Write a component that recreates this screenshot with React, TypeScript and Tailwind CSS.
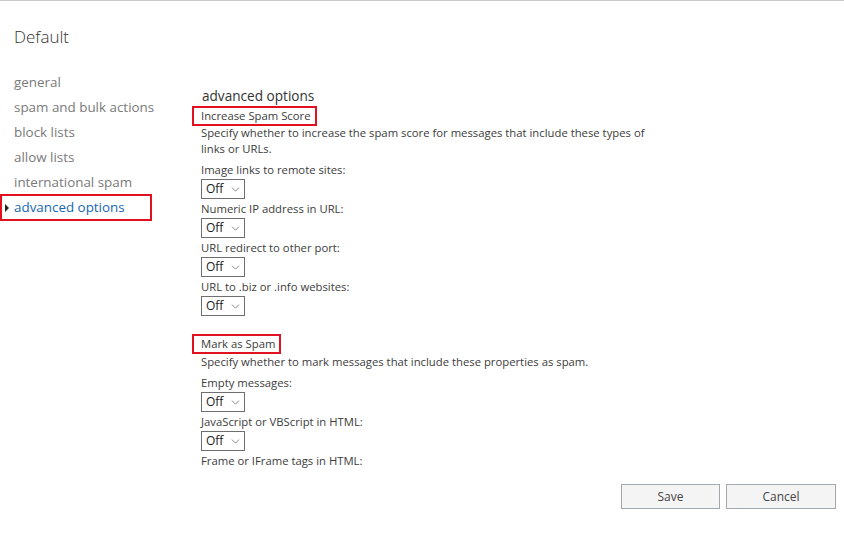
import { ChevronDown } from "lucide-react";

const navItems = [
    "general",
    "spam and bulk actions",
    "block lists",
    "allow lists",
    "international spam",
];

function OffSelect() {
    return (
        <div className="flex h-[20px] w-[44px] items-center justify-between border border-[#6e6e6e] bg-white pl-[4px] pr-[2px] text-[12px] text-[#1a1a1a]">
            <span>Off</span>
            <ChevronDown className="h-[13px] w-[13px] text-[#666]" strokeWidth={1.4} />
        </div>
    );
}

function Field({ label }: { label: string }) {
    return (
        <div>
            <div className="h-[19px] leading-[19px]">{label}</div>
            <OffSelect />
        </div>
    );
}

function SectionTitle({ children }: { children: string }) {
    return (
        <div className="-ml-[9px] inline-block h-[20px] border-2 border-[#e3101f] pl-[7px] pr-[4px] leading-[16px]">
            {children}
        </div>
    );
}

export default function App() {
    return (
        <div className="relative h-[535px] w-[844px] overflow-hidden border-t border-[#c8c8c8] bg-white font-['Open_Sans',sans-serif]">
            <div className="flex">
                {/* Left nav */}
                <div className="w-[192px] shrink-0">
                    <h1 className="pl-[14px] pt-[24px] text-[17px] font-light leading-[24px] text-[#333]">
                        Default
                    </h1>
                    <ul className="mt-[21px] text-[13.4px] text-[#7a7a7a]">
                        {navItems.map((item) => (
                            <li key={item} className="h-[25px] pl-[14px] leading-[25px]">
                                {item}
                            </li>
                        ))}
                        <li className="relative -mt-[1px] h-[27px] w-[152px] border-2 border-[#e3101f] pl-[12px] leading-[23px] text-[#1567b5]">
                            <span className="absolute left-[3px] top-[8px] h-0 w-0 border-y-[4px] border-l-[4px] border-y-transparent border-l-[#222]" />
                            advanced options
                        </li>
                    </ul>
                </div>

                {/* Form */}
                <div className="pl-[9px] pt-[85px] text-[11.3px] text-[#3c3c3c]">
                    <h2 className="pl-[1px] text-[13.6px] leading-[20px] text-[#333]">
                        advanced options
                    </h2>
                    <SectionTitle>Increase Spam Score</SectionTitle>
                    <p className="mt-[-1px] w-[460px] leading-[16px]">
                        Specify whether to increase the spam score for messages that include these types of
                        links or URLs.
                    </p>
                    <div className="mt-[3px]">
                        <Field label="Image links to remote sites:" />
                        <Field label="Numeric IP address in URL:" />
                        <Field label="URL redirect to other port:" />
                        <Field label="URL to .biz or .info websites:" />
                    </div>

                    <div className="mt-[18px]">
                        <SectionTitle>Mark as Spam</SectionTitle>
                    </div>
                    <p className="leading-[16px]">
                        Specify whether to mark messages that include these properties as spam.
                    </p>
                    <div className="mt-[3px]">
                        <Field label="Empty messages:" />
                        <Field label="JavaScript or VBScript in HTML:" />
                        <div className="h-[19px] leading-[19px]">Frame or IFrame tags in HTML:</div>
                    </div>
                </div>
            </div>

            {/* Buttons */}
            <div className="absolute right-[8px] top-[483px] flex gap-[6px] text-[12px] text-[#444]">
                <button className="h-[25px] w-[99px] border border-[#a3a8ad] bg-[#f4f4f4]">Save</button>
                <button className="h-[25px] w-[110px] border border-[#a3a8ad] bg-[#f4f4f4]">Cancel</button>
            </div>
        </div>
    );
}
